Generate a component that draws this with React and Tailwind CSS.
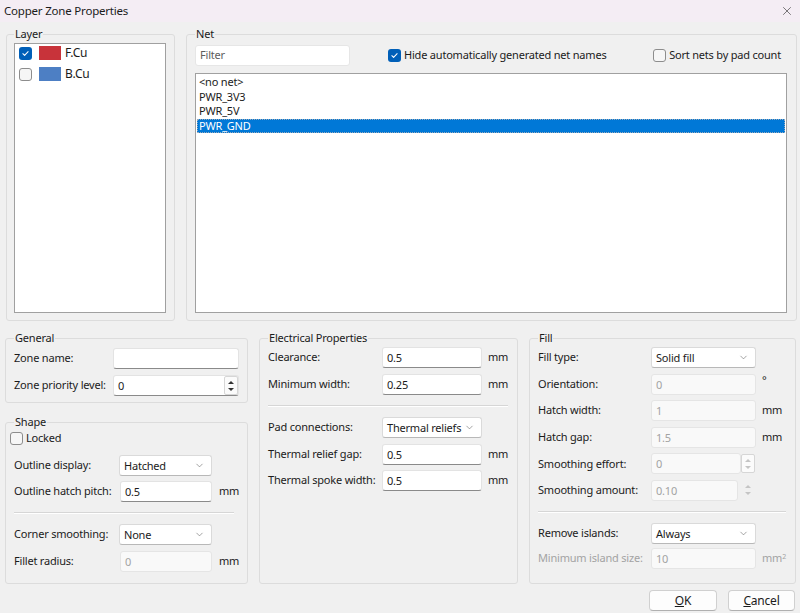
import { ChevronDown, X } from "lucide-react";

const font = { fontFamily: '"Segoe UI", "Noto Sans", sans-serif' };

function Check({ checked }) {
    return checked ? (
        <span className="inline-flex h-[13px] w-[13px] shrink-0 items-center justify-center rounded-[3px] bg-[#005fb8]">
            <svg viewBox="0 0 12 12" className="h-[9px] w-[9px]" fill="none" stroke="white" strokeWidth="1.4">
                <path d="M2.5 6.3l2.3 2.3 4.7-5" strokeLinecap="round" strokeLinejoin="round" />
            </svg>
        </span>
    ) : (
        <span className="inline-block h-[13px] w-[13px] shrink-0 rounded-[3px] border border-[#8d8d8d] bg-[#f6f6f6]" />
    );
}

function Input({ value = "", w = "w-[100px]", disabled, children }) {
    return (
        <div
            className={`relative flex h-[21px] ${w} shrink-0 items-center rounded-[3px] border px-[4px] ${
                disabled
                    ? "border-[#e5e5e5] bg-[#f9f9f9] text-[#a3a3a3]"
                    : "border-[#e3e3e3] border-b-[#8a8a8a] bg-white text-[#1b1b1b]"
            }`}
        >
            <span className="leading-none">{value}</span>
            {children}
        </div>
    );
}

function Select({ value, w = "w-[93px]" }) {
    return (
        <div className={`flex h-[21px] ${w} shrink-0 items-center justify-between rounded-[3px] border border-[#dadada] border-b-[#b8b8b8] bg-white pl-[4px] pr-[6px] text-[#1b1b1b]`}>
            <span className="leading-none">{value}</span>
            <ChevronDown size={11} strokeWidth={1.3} className="text-[#666]" />
        </div>
    );
}

function Spinner({ dim, boxed }) {
    const c = dim ? "border-b-[#c4c4c4] border-t-[#c4c4c4]" : "border-b-[#333] border-t-[#333]";
    return (
        <div className={`flex h-[19px] w-[14px] shrink-0 flex-col items-center justify-center gap-[4px] ${boxed ? "rounded-[2px] border border-[#d6d6d6] bg-[#fbfbfb]" : ""}`}>
            <span className={`h-0 w-0 border-x-[3px] border-b-[3px] border-x-transparent ${c} border-t-0`} />
            <span className={`h-0 w-0 border-x-[3px] border-t-[3px] border-x-transparent ${c} border-b-0`} />
        </div>
    );
}

function Row({ label, lw, dimLabel, children, unit }) {
    return (
        <div className="flex h-[21px] items-center">
            <div className={`${lw} shrink-0 ${dimLabel ? "text-[#a3a3a3]" : "text-[#1b1b1b]"}`}>{label}</div>
            {children}
            {unit && <div className={`ml-[6px] ${dimLabel ? "text-[#a3a3a3]" : "text-[#1b1b1b]"}`}>{unit}</div>}
        </div>
    );
}

function Group({ title, className, children }) {
    return (
        <fieldset className={`rounded-[3px] border border-[#dcdcdc] px-[8px] ${className}`}>
            <legend className="h-[16px] px-[1px] leading-[16px] text-[#1b1b1b]">{title}</legend>
            {children}
        </fieldset>
    );
}

const Sep = ({ className }) => <div className={`h-[2px] border-t border-[#d6d6d6] bg-white ${className}`} />;

const nets = ["<no net>", "PWR_3V3", "PWR_5V", "PWR_GND"];

export default function App() {
    return (
        <div className="h-[613px] w-[800px] overflow-hidden whitespace-nowrap bg-[#f0f0f0] text-[11px] tracking-[-0.2px] text-[#1b1b1b]" style={font}>
            {/* title bar */}
            <div className="flex h-[22px] items-center justify-between bg-[#f4edf4] pl-[4px] pr-[6px]">
                <span className="text-[11.5px] text-[#1b1b1b]">Copper Zone Properties</span>
                <X size={14} strokeWidth={1.1} className="text-[#333]" />
            </div>

            {/* top row */}
            <div className="mt-[4px] flex gap-[11px] pl-[6px]">
                <Group title="Layer" className="h-[295px] w-[169px] pl-[7px]">
                    <div className="mt-[1px] h-[270px] w-[152px] border border-[#a0a0a0] bg-white">
                        <div className="-mt-[1.5px]">
                            {[
                                ["F.Cu", "bg-[#c8333a]", true],
                                ["B.Cu", "bg-[#4d7fc4]", false],
                            ].map(([name, color, on]) => (
                                <div key={name} className="flex h-[21px] items-center pl-[4px]">
                                    <Check checked={on} />
                                    <span className={`ml-[7px] h-[14px] w-[22px] ${color}`} />
                                    <span className="ml-[4px] text-[12px]">{name}</span>
                                </div>
                            ))}
                        </div>
                    </div>
                </Group>

                <Group title="Net" className="h-[295px] w-[611px]">
                    <div className="mt-[3px] flex h-[21px] items-center">
                        <div className="flex h-[21px] w-[155px] items-center rounded-[3px] border border-[#e6e6e6] bg-white px-[4px] text-[#5d5d5d]">
                            Filter
                        </div>
                        <div className="ml-[38px] flex items-center gap-[3px]">
                            <Check checked />
                            <span>Hide automatically generated net names</span>
                        </div>
                        <div className="ml-auto mr-[7px] flex items-center gap-[3px]">
                            <Check />
                            <span>Sort nets by pad count</span>
                        </div>
                    </div>
                    <div className="mt-[7px] h-[240px] w-[592px] border border-[#a0a0a0] bg-white p-[1px]">
                        {nets.map((n, i) =>
                            i === 3 ? (
                                <div key={n} className="h-[14.5px] border border-dotted border-[#9ab] bg-[#0078d7] pl-[1px] leading-[12.5px] text-white">
                                    {n}
                                </div>
                            ) : (
                                <div key={n} className="h-[14.5px] pl-[2px] leading-[14.5px]">
                                    {n}
                                </div>
                            )
                        )}
                    </div>
                </Group>
            </div>

            {/* bottom row */}
            <div className="mt-[9px] flex gap-[11px] pl-[5px]">
                <div className="flex w-[243px] flex-col gap-[11px]">
                    <Group title="General" className="pb-[6px]">
                        <div className="mt-[2px] flex flex-col gap-[6px]">
                            <Row label="Zone name:" lw="w-[99px]">
                                <Input w="w-[126px]" />
                            </Row>
                            <Row label="Zone priority level:" lw="w-[99px]">
                                <Input w="w-[126px]" value="0">
                                    <div className="absolute right-[0px] top-[0px]">
                                        <Spinner boxed />
                                    </div>
                                </Input>
                            </Row>
                        </div>
                    </Group>

                    <Group title="Shape" className="h-[170px] pl-[8px]">
                        <div className="-ml-[4px] mt-[1px] flex h-[15px] items-center gap-[3px]">
                            <Check />
                            <span>Locked</span>
                        </div>
                        <div className="mt-[9px] flex flex-col gap-[5px]">
                            <Row label="Outline display:" lw="w-[105px]">
                                <Select value="Hatched" />
                            </Row>
                            <Row label="Outline hatch pitch:" lw="w-[106px]" unit={<span className="ml-[1px]">mm</span>}>
                                <Input w="w-[92px]" value="0.5" />
                            </Row>
                        </div>
                        <Sep className="my-[10px] mr-[5px]" />
                        <div className="flex flex-col gap-[6px]">
                            <Row label="Corner smoothing:" lw="w-[105px]">
                                <Select value="None" />
                            </Row>
                            <Row label="Fillet radius:" lw="w-[106px]" unit={<span className="ml-[1px]">mm</span>}>
                                <Input w="w-[92px]" value="0" disabled />
                            </Row>
                        </div>
                    </Group>
                </div>

                <Group title="Electrical Properties" className="h-[254px] w-[259px]">
                    <div className="mt-[1px] flex flex-col gap-[6px]">
                        <Row label="Clearance:" lw="w-[114px]" unit="mm">
                            <Input value="0.5" />
                        </Row>
                        <Row label="Minimum width:" lw="w-[114px]" unit="mm">
                            <Input value="0.25" />
                        </Row>
                    </div>
                    <Sep className="my-[10px] mr-[1px]" />
                    <div className="flex flex-col gap-[5.5px]">
                        <Row label="Pad connections:" lw="w-[114px]">
                            <Select value="Thermal reliefs" w="w-[100px]" />
                        </Row>
                        <Row label="Thermal relief gap:" lw="w-[114px]" unit="mm">
                            <Input value="0.5" />
                        </Row>
                        <Row label="Thermal spoke width:" lw="w-[114px]" unit="mm">
                            <Input value="0.5" />
                        </Row>
                    </div>
                </Group>

                <Group title="Fill" className="h-[254px] w-[267px]">
                    <div className="mt-[1px] flex flex-col gap-[5.6px]">
                        <Row label="Fill type:" lw="w-[113px]">
                            <Select value="Solid fill" w="w-[105px]" />
                        </Row>
                        <Row label="Orientation:" lw="w-[113px]" unit={<span className="-mt-[8px] block">°</span>}>
                            <Input w="w-[105px]" value="0" disabled />
                        </Row>
                        <Row label="Hatch width:" lw="w-[113px]" unit="mm">
                            <Input w="w-[105px]" value="1" disabled />
                        </Row>
                        <Row label="Hatch gap:" lw="w-[113px]" unit="mm">
                            <Input w="w-[105px]" value="1.5" disabled />
                        </Row>
                        <Row label="Smoothing effort:" lw="w-[113px]">
                            <Input w="w-[90px]" value="0" disabled />
                            <Spinner dim boxed />
                        </Row>
                        <Row label="Smoothing amount:" lw="w-[113px]">
                            <Input w="w-[87px]" value="0.10" disabled />
                            <div className="ml-[3px]">
                                <Spinner dim />
                            </div>
                        </Row>
                    </div>
                    <Sep className="my-[10px] mr-[1px]" />
                    <div className="flex flex-col gap-[4px]">
                        <Row label="Remove islands:" lw="w-[113px]">
                            <Select value="Always" w="w-[105px]" />
                        </Row>
                        <Row
                            label="Minimum island size:"
                            lw="w-[113px]"
                            dimLabel
                            unit={
                                <span>
                                    mm<sup className="text-[7px]">2</sup>
                                </span>
                            }
                        >
                            <Input w="w-[105px]" value="10" disabled />
                        </Row>
                    </div>
                </Group>
            </div>

            {/* buttons */}
            <div className="mt-[6px] flex justify-end gap-[11px] pr-[5px]">
                <button className="h-[21px] w-[68px] rounded-[4px] border border-[#d0d0d0] border-b-[#b0b0b0] bg-[#fdfdfd] text-[12px] text-[#1b1b1b]">
                    <span className="underline">O</span>K
                </button>
                <button className="h-[21px] w-[67px] rounded-[4px] border border-[#d0d0d0] border-b-[#b0b0b0] bg-[#fdfdfd] text-[12px] text-[#1b1b1b]">
                    <span className="underline">C</span>ancel
                </button>
            </div>
        </div>
    );
}
